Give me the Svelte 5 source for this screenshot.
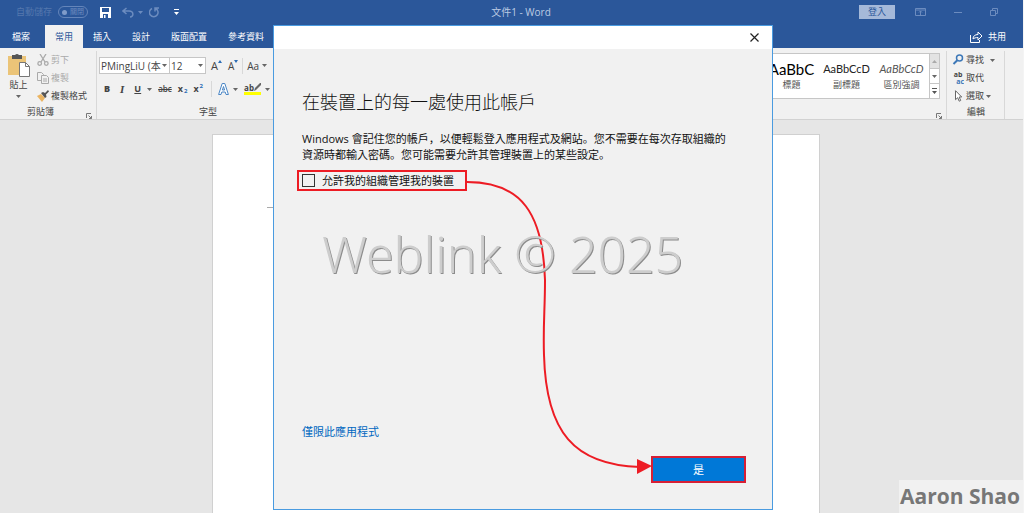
<script lang="ts">
    const tabs = ['檔案', '常用', '插入', '設計', '版面配置', '參考資料']
    const styles = [
        { sample: 'AaBbC', name: '標題', kind: 'title' },
        { sample: 'AaBbCcD', name: '副標題', kind: 'subtitle' },
        { sample: 'AaBbCcD', name: '區別強調', kind: 'emphasis' }
    ]

    let active = $state('常用')
    let open = $state(true)
    let manage = $state(false)
</script>

{#snippet caret()}
    <svg class="caret" width="5" height="3" viewBox="0 0 5 3" aria-hidden="true"><path d="M0 0h5L2.500 3z" fill="currentColor" /></svg>
{/snippet}

{#snippet launcher()}
    <button class="launcher" aria-label="更多選項">
        <svg width="6" height="6" viewBox="0 0 6 6" fill="none" stroke="#777"><path d="M.5 5V.5H5M2.500 2.500l3 3M5.500 3v2.500H3" /></svg>
    </button>
{/snippet}

<div class="window">
    <header class="titlebar">
        <div class="quick">
            <span class="autosave">自動儲存</span>
            <button class="toggle"><i></i>關閉</button>
            <button class="save" aria-label="儲存">
                <svg width="11" height="11" viewBox="0 0 11 11"><path d="M0 0h11v11H0z" fill="#fff" /><path d="M2 1h7v4H2zM3 7h5v4H3z" fill="#2b579a" /><path d="M4 8h1.500v3H4z" fill="#fff" /></svg>
            </button>
            <button class="undo" aria-label="復原">
                <svg width="12" height="11" viewBox="0 0 12 11" fill="none" stroke="currentColor" stroke-width="1.500"><path d="M4.500 1L1 4l3.500 3M1 4h6c5 0 5 6 1 6" /></svg>
                {@render caret()}
            </button>
            <button class="redo" aria-label="重複">
                <svg width="11" height="11" viewBox="0 0 11 11" fill="none" stroke="currentColor" stroke-width="1.500"><path d="M6 4.500V1h4M6.500 1.500a4.300 4.300 0 1 1-3.500 0" /></svg>
            </button>
            <button class="more" aria-label="自訂">
                <svg width="5" height="6" viewBox="0 0 5 6" fill="#fff"><path d="M0 0h5v1H0zM0 3h5L2.500 6z" /></svg>
            </button>
        </div>
        <span class="doc">文件1 - Word</span>
        <div class="system">
            <button class="login">登入</button>
            <button aria-label="功能區顯示選項">
                <svg width="11" height="8" viewBox="0 0 11 8" fill="none" stroke="currentColor"><path d="M.5.5h10v7H.5zM.5 2h10M5.500 7V3M4 4.500L5.500 3 7 4.500" /></svg>
            </button>
            <button aria-label="最小化">
                <svg width="8" height="8" viewBox="0 0 8 8" stroke="currentColor"><path d="M0 4.500h8" /></svg>
            </button>
            <button aria-label="還原">
                <svg width="8" height="8" viewBox="0 0 8 8" fill="none" stroke="currentColor"><path d="M.5 2.500h5v5h-5zM2.500 2V.5h5v5H6" /></svg>
            </button>
        </div>
    </header>

    <nav class="tabs">
        {#each tabs as tab}
            <button class:active={tab === active} onclick={() => (active = tab)}>{tab}</button>
        {/each}
        <button class="share">
            <svg width="13" height="12" viewBox="0 0 13 12" fill="none" stroke="#fff"><path d="M.5 4v7.500h9V9M3 8c0-3 2-4.500 5-4.500V1l4 4-4 4V6.500C6 6.500 4 7 3 8z" /></svg>
            共用
        </button>
    </nav>

    <section class="ribbon">
        <div class="group clipboard">
            <div class="body">
                <button class="paste">
                    <svg width="22" height="23" viewBox="0 0 22 23"><path d="M0 2h18v19H0z" fill="#ebc478" /><path d="M4 1h3q2-2 4 0h3v4H4z" fill="#555" /><path d="M11.500 8.500h6l4 4v10h-10z" fill="#fff" stroke="#777" /><path d="M17.500 8.500v4h4" fill="none" stroke="#777" /></svg>
                    貼上
                    {@render caret()}
                </button>
                <div class="commands">
                    <button disabled>
                        <svg width="12" height="12" viewBox="0 0 12 12" fill="none" stroke="#aaa" stroke-width="1.300"><path d="M3 0l5 8M9 0L4 8" /><circle cx="2.700" cy="9.500" r="1.800" /><circle cx="9.300" cy="9.500" r="1.800" /></svg>
                        剪下
                    </button>
                    <button disabled>
                        <svg width="12" height="12" viewBox="0 0 12 12" fill="#f1f1f1" stroke="#aaa"><path d="M.5.5h4l2 2v6h-6z" /><path d="M4.500 3.500h5l2 2v6h-7zM6 7h4M6 9h4" /></svg>
                        複製
                    </button>
                    <button>
                        <svg width="12" height="12" viewBox="0 0 12 12"><path d="M0 6l4-2 4 4-3 4z" fill="#ebb461" /><path d="M4 3l2-1 2 1 3-3 1 1.500-3 3L9.500 7 8 8z" fill="#555" /></svg>
                        複製格式
                    </button>
                </div>
            </div>
            <footer>剪貼簿{@render launcher()}</footer>
        </div>

        <div class="group font">
            <div class="body rows">
                <div class="row top">
                    <span class="pick name">
                        <select aria-label="字型"><option>PMingLiU (本</option></select>
                        {@render caret()}
                    </span>
                    <span class="pick size">
                        <select aria-label="字型大小"><option>12</option></select>
                        {@render caret()}
                    </span>
                    <button class="grow">A<svg width="4" height="3" viewBox="0 0 4 3"><path d="M0 3h4L2 0z" fill="#2b6cb5" /></svg></button>
                    <button class="grow small">A<svg width="4" height="3" viewBox="0 0 4 3"><path d="M0 0h4L2 3z" fill="#2b6cb5" /></svg></button>
                    <span class="line"></span>
                    <button class="case">Aa{@render caret()}</button>
                </div>
                <div class="row bottom">
                    <button><b>B</b></button>
                    <button><em>I</em></button>
                    <button><u>U</u></button>
                    <button aria-label="底線樣式">{@render caret()}</button>
                    <button class="strike">abc</button>
                    <button>x<sub>2</sub></button>
                    <button>x<sup>2</sup></button>
                    <span class="line"></span>
                    <button aria-label="文字效果">
                        <svg width="11" height="12" viewBox="0 0 11 12" fill="#fff" stroke="#4a86c5"><path d="M.6 11.500L4.200.5h2.600l3.600 11H8L7.200 9H3.800L3 11.500zM4.400 7h2.200L5.500 3.500z" /></svg>
                        {@render caret()}
                    </button>
                    <button class="mark"><span>ab<svg width="7" height="8" viewBox="0 0 7 8"><path d="M7 0v2L2 7 0 8l1-3 5-5z" fill="#666" /></svg></span>{@render caret()}</button>
                    <button class="color" aria-label="字型色彩"></button>
                </div>
            </div>
            <footer>字型</footer>
        </div>

        <div class="group gallery">
            <div class="body">
                <div class="styles">
                    {#each styles as style}
                        <button class={style.kind}><span>{style.sample}</span>{style.name}</button>
                    {/each}
                </div>
                <div class="scroll">
                    <button class="off" aria-label="上一列"><svg width="5" height="3" viewBox="0 0 5 3"><path d="M0 3h5L2.500 0z" fill="#aaa" /></svg></button>
                    <button aria-label="下一列">{@render caret()}</button>
                    <button aria-label="更多樣式"><svg width="5" height="6" viewBox="0 0 5 6" fill="#555"><path d="M0 0h5v1H0zM0 3h5L2.500 6z" /></svg></button>
                </div>
            </div>
            <footer>{@render launcher()}</footer>
        </div>

        <div class="group editing">
            <div class="body commands">
                <button>
                    <svg width="12" height="12" viewBox="0 0 12 12" fill="none" stroke="#3d78b8" stroke-width="1.500"><circle cx="7.500" cy="4" r="3" /><path d="M5.300 6.300L1.500 10" stroke-width="2" /></svg>
                    尋找 <span class="gap"></span>{@render caret()}
                </button>
                <button>
                    <span class="swap"><span>ab</span><span class="ac">ac</span></span>
                    取代
                </button>
                <button>
                    <svg width="12" height="12" viewBox="0 0 12 12" fill="#fff" stroke="#666"><path d="M3.500.7v9l2.200-2 1.500 3.500 1.500-.7L7.200 7h2.500z" /></svg>
                    選取{@render caret()}
                </button>
            </div>
            <footer>編輯</footer>
        </div>
    </section>

    <main class="canvas">
        <div class="page"><span class="margin"></span></div>
    </main>

    {#if open}
        <div class="dialog" role="dialog" aria-labelledby="heading">
            <div class="caption">
                <button aria-label="關閉" onclick={() => (open = false)}>
                    <svg width="9" height="9" viewBox="0 0 9 9" stroke="#222" stroke-width="1.200"><path d="M.5.5l8 8M8.500.5l-8 8" /></svg>
                </button>
            </div>
            <div class="content">
                <h1 id="heading">在裝置上的每一處使用此帳戶</h1>
                <p>Windows 會記住您的帳戶，以便輕鬆登入應用程式及網站。您不需要在每次存取組織的<br />資源時都輸入密碼。您可能需要允許其管理裝置上的某些設定。</p>
                <label class="manage">
                    <input type="checkbox" bind:checked={manage} />
                    允許我的組織管理我的裝置
                </label>
                <a href="#app-only">僅限此應用程式</a>
                <button class="yes">是</button>
            </div>
            <svg class="arrow" width="500" height="486" viewBox="273 25 500 486" aria-hidden="true">
                <path d="M467 182C522 182 543 214 545 280C545 310 543 325 544 355C546 432 574 465 640 467" fill="none" stroke="#ed1c24" stroke-width="2" />
                <path d="M637 459v15l15-8z" fill="#ed1c24" />
            </svg>
            <div class="watermark">Weblink © 2025</div>
        </div>
    {/if}

    <div class="author">Aaron Shao</div>
</div>

<style>
    :global(body) {
        background: #e6e6e6;
    }

    .window {
        position: relative;
        display: flex;
        flex-direction: column;
        min-height: 100vh;
        overflow: hidden;
        box-sizing: border-box;
        border-right: 1px solid #f4f4f4;
        font: 9px/12px "Open Sans", "Noto Sans CJK TC", sans-serif;
        color: #444;
    }

    button {
        display: flex;
        align-items: center;
        padding: 0;
        border: 0;
        background: none;
        color: inherit;
        font: inherit;
        white-space: nowrap;
    }

    svg {
        display: block;
        flex: none;
    }

    .caret {
        color: #666;
    }

    .titlebar {
        display: grid;
        grid-template-columns: 1fr auto 1fr;
        align-items: center;
        height: 24px;
        padding: 0 25px 1px 16px;
        background: #2b579a;
        color: #6c8cbf;
    }

    .quick, .system {
        display: flex;
        align-items: center;
    }

    .autosave {
        width: 42px;
        color: #5577ae;
    }

    .toggle {
        gap: 3px;
        box-sizing: border-box;
        width: 30px;
        height: 12px;
        padding-left: 3px;
        border: 1px solid #6485ba;
        border-radius: 6px;
        font-size: 7px;
    }

    .toggle i {
        width: 5px;
        height: 5px;
        border-radius: 50%;
        background: #7f9bc9;
    }

    .save {
        margin-left: 12px;
    }

    .undo {
        gap: 4px;
        margin-left: 11px;
    }

    .undo .caret {
        color: inherit;
    }

    .redo {
        margin-left: 6px;
    }

    .more {
        margin-left: 14px;
    }

    .doc {
        padding-left: 28px;
        font-size: 10px;
        color: #bccbe3;
    }

    .system {
        justify-content: flex-end;
        gap: 28px;
    }

    .login {
        justify-content: center;
        width: 36px;
        height: 14px;
        margin-right: -8px;
        background: #a5b9d9;
        color: #2b579a;
    }

    .tabs {
        display: flex;
        height: 23px;
        background: #2b579a;
        color: #fff;
    }

    .tabs button {
        padding: 0 11px 0 10px;
    }

    .tabs button:first-child {
        padding: 0 15px 0 12px;
    }

    .tabs .active {
        padding: 0 10px;
        background: #f1f1f1;
        color: #2b579a;
    }

    .tabs .share {
        gap: 5px;
        margin-left: auto;
        padding-right: 17px;
    }

    .ribbon {
        display: flex;
        height: 72px;
        box-sizing: border-box;
        padding-top: 3px;
        background: #f1f1f1;
        border-bottom: 1px solid #d2d2d2;
    }

    .group {
        display: flex;
        flex-direction: column;
        box-sizing: border-box;
        border-right: 1px solid #d8d8d8;
    }

    .body {
        display: flex;
        height: 54px;
    }

    footer {
        display: flex;
        align-items: center;
        justify-content: center;
        position: relative;
        height: 14px;
    }

    .launcher {
        position: absolute;
        right: 4px;
        bottom: 0;
    }

    .clipboard {
        width: 97px;
    }

    .clipboard footer {
        padding-right: 15px;
    }

    .paste {
        flex-direction: column;
        gap: 2px;
        width: 37px;
        padding-top: 3px;
    }

    .paste .caret {
        margin-top: 2px;
    }

    .commands {
        display: flex;
        flex-direction: column;
    }

    .commands button {
        gap: 2px;
        height: 18px;
    }

    .commands button:disabled {
        color: #aaa;
    }

    .font {
        flex: 1;
        border: 0;
    }

    .font footer {
        width: 222px;
    }

    .rows {
        flex-direction: column;
        padding: 6px 0 0 2px;
        box-sizing: border-box;
    }

    .row {
        display: flex;
        align-items: center;
        height: 17px;
    }

    .pick {
        display: flex;
        align-items: center;
        box-sizing: border-box;
        height: 17px;
        border: 1px solid #c6c6c6;
        padding-right: 2px;
        background: #fff;
    }

    .pick select {
        appearance: none;
        flex: 1;
        min-width: 0;
        padding: 0 0 0 1px;
        border: 0;
        background: none;
        color: #444;
        font: 10px/14px "Open Sans", "Noto Sans CJK TC", sans-serif;
    }

    .name {
        width: 71px;
    }

    .size {
        width: 36px;
        border-left: 0;
    }

    .grow {
        align-items: flex-start;
        margin-left: 5px;
        font-size: 11px;
    }

    .grow.small {
        margin-left: 6px;
        font-size: 10px;
    }

    .line {
        width: 1px;
        height: 16px;
        margin: 0 4px;
        background: #d8d8d8;
    }

    .case {
        gap: 3px;
        font-size: 10px;
    }

    .bottom {
        gap: 10px;
        height: 30px;
        padding-left: 5px;
        font-weight: 700;
    }

    .bottom button {
        gap: 4px;
    }

    .bottom .line {
        margin: 0 -4px 0 -2px;
    }

    .bottom button + button:nth-child(n + 4) {
        margin-left: -4px;
    }

    .bottom em {
        font-family: "Liberation Serif", serif;
        font-size: 11px;
    }

    .strike {
        text-decoration: line-through;
        font-size: 8px;
        font-weight: 600;
    }

    .bottom sub, .bottom sup {
        margin-left: -3px;
        font-size: 6px;
        line-height: 7px;
        color: #2b6cb5;
    }

    .bottom sub {
        align-self: flex-end;
    }

    .bottom sup {
        align-self: flex-start;
    }

    .mark span {
        display: flex;
        border-bottom: 3px solid #ff0;
        line-height: 9px;
        font-size: 8px;
    }

    .color {
        align-self: flex-end;
        width: 11px;
        height: 3px;
        margin-bottom: 9px;
        background: #f00;
    }

    .gallery {
        width: 184px;
    }

    .gallery .body {
        box-sizing: border-box;
        padding: 2px 6px 6px 0;
    }

    .styles {
        display: flex;
        flex: 1;
        border: 1px solid #c6c6c6;
        border-right: 0;
        background: #fff;
    }

    .styles button {
        flex: 1;
        flex-direction: column;
        justify-content: center;
        gap: 2px;
        color: #555;
    }

    .styles span {
        font: 11px/16px Lato, sans-serif;
        color: #222;
    }

    .styles .title span {
        font-size: 15px;
        color: #000;
    }

    .styles .emphasis span {
        font-style: italic;
        color: #555;
    }

    .scroll {
        display: flex;
        flex-direction: column;
        width: 11px;
        border: 1px solid #c6c6c6;
        box-sizing: border-box;
        background: #fff;
    }

    .scroll button {
        flex: 1;
        justify-content: center;
    }

    .scroll button + button {
        border-top: 1px solid #c6c6c6;
    }

    .scroll .off {
        background: #e3e3e3;
    }

    .editing {
        width: 58px;
        margin-right: 18px;
        padding-left: 5px;
    }

    .editing footer {
        padding-right: 4px;
    }

    .gap {
        width: 2px;
    }

    .swap {
        display: flex;
        flex-direction: column;
        width: 12px;
        font-size: 7px;
        line-height: 7px;
        font-weight: 700;
    }

    .swap span {
        height: 7px;
        overflow: hidden;
    }

    .swap .ac {
        align-self: flex-end;
        color: #3d78b8;
    }

    .canvas {
        display: flex;
        flex: 1;
        padding: 14px 203px 0 212px;
    }

    .page {
        flex: 1;
        padding: 72px 0 0 54px;
        border: 1px solid #d0d0d0;
        border-bottom: 0;
        background: #fff;
    }

    .margin {
        display: block;
        width: 8px;
        height: 1px;
        background: #aaa;
    }

    .dialog {
        position: absolute;
        top: 25px;
        left: 273px;
        display: flex;
        flex-direction: column;
        box-sizing: border-box;
        width: 500px;
        height: 485px;
        border: 1px solid #4a9be0;
        background: #f1f1f1;
        color: #111;
        font-family: "Open Sans", "Noto Sans CJK JP", sans-serif;
    }

    .caption {
        display: flex;
        justify-content: flex-end;
        height: 23px;
        padding-right: 13px;
        background: #fff;
    }

    .content {
        display: flex;
        flex: 1;
        flex-direction: column;
        align-items: flex-start;
        padding: 40px 26px 26px 23px;
        font-size: 11px;
        line-height: 16px;
    }

    h1 {
        margin: 0 5px;
        font-size: 18px;
        line-height: 26px;
        font-weight: 300;
    }

    p {
        margin: 16px 5px 7px;
        white-space: nowrap;
    }

    .manage {
        display: flex;
        align-items: center;
        gap: 7px;
        box-sizing: border-box;
        width: 170px;
        height: 21px;
        padding-left: 3px;
        border: 2px solid #ed1c24;
    }

    .manage input {
        appearance: none;
        box-sizing: border-box;
        width: 13px;
        height: 13px;
        margin: 0;
        border: 1px solid #333;
    }

    .manage input:checked {
        background: #0078d7;
    }

    a {
        margin: auto 5px 16px;
        color: #0067c0;
        text-decoration: none;
    }

    .yes {
        align-self: flex-end;
        justify-content: center;
        width: 95px;
        height: 27px;
        border: 2px solid #d71f35;
        background: #0078d7;
        color: #fff;
    }

    .arrow {
        position: absolute;
        top: -1px;
        left: -1px;
        pointer-events: none;
    }

    .watermark {
        position: absolute;
        top: 194px;
        left: 48px;
        font-family: "Noto Sans", "Open Sans", sans-serif;
        font-size: 50px;
        line-height: 68px;
        font-weight: 300;
        white-space: nowrap;
        color: #cdcdcd;
        text-shadow: 1px 1px 0 #8c8c8c;
        pointer-events: none;
    }

    .author {
        position: absolute;
        right: 0;
        bottom: 0;
        padding: 2px 3px 3px 1px;
        background: #f1f1f1;
        color: #777;
        font-size: 21px;
        line-height: 28px;
        font-weight: 700;
    }
</style>
